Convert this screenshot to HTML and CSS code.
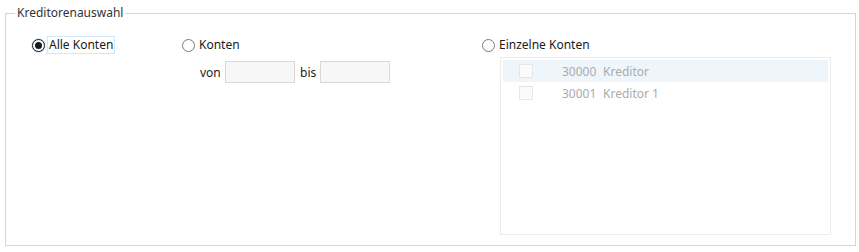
FILE: index.html
```html
<!DOCTYPE html>
<html lang="de">
<head>
  <meta charset="UTF-8" />
  <title>Kreditorenauswahl</title>
  <link rel="stylesheet" href="styles.css">
</head>
<body>
  <fieldset class="group">
    <legend>Kreditorenauswahl</legend>
    <div class="columns">
      <div class="col col-all">
        <label class="radio checked">
          <span class="dot"></span>
          <span class="text focus">Alle Konten</span>
        </label>
      </div>

      <div class="col col-range">
        <label class="radio">
          <span class="dot"></span>
          <span class="text">Konten</span>
        </label>
        <div class="range">
          <span class="range-label">von</span>
          <span class="box"></span>
          <span class="range-label bis">bis</span>
          <span class="box"></span>
        </div>
      </div>

      <div class="col col-single">
        <label class="radio">
          <span class="dot"></span>
          <span class="text">Einzelne Konten</span>
        </label>
        <div class="listbox">
          <div class="row selected">
            <span class="check"></span>
            <span class="nr">30000</span>
            <span class="name">Kreditor</span>
          </div>
          <div class="row">
            <span class="check"></span>
            <span class="nr">30001</span>
            <span class="name">Kreditor 1</span>
          </div>
        </div>
      </div>
    </div>
  </fieldset>
</body>
</html>
```

FILE: styles.css
```css
*, *::before, *::after {
  box-sizing: border-box;
}

body {
  margin: 0;
  background: #ffffff;
  font-family: 'Noto Sans', 'Open Sans', sans-serif;
  font-size: 12px;
  color: #1a1a1a;
}

/* Group box */
.group {
  margin: 5px 3px 0 5px;
  height: 241px;
  padding: 16px 0 0 9px;
  border: 1px solid #d5d5d5;
}

.group legend {
  padding: 0 2px;
  line-height: 16px;
  color: #333;
}

.columns {
  display: flex;
  padding-left: 17px;
}

.col-all { width: 150px; }
.col-range { width: 300px; }
.col-single { flex: 1; }

/* Radio buttons */
.radio {
  display: flex;
  align-items: center;
  height: 16px;
}

.radio .dot {
  width: 13px;
  height: 13px;
  border: 1px solid #7a7a7a;
  border-radius: 50%;
  background: #fff;
  margin-right: 2px;
  position: relative;
  flex-shrink: 0;
}

.radio.checked .dot {
  border-color: #1a1a1a;
  box-shadow: 0 0 0 0.5px #b9d3ea;
}

.radio.checked .dot::after {
  content: '';
  position: absolute;
  left: 2px;
  top: 2px;
  width: 7px;
  height: 7px;
  border-radius: 50%;
  background: #1a1a1a;
}

.radio .text {
  padding: 0 1px;
  line-height: 16px;
  border: 1px solid transparent;
}

.radio .text.focus {
  border-color: #d4e6f6;
}

/* von / bis */
.range {
  display: flex;
  align-items: center;
  margin: 8px 0 0 18px;
}

.range-label {
  width: 25px;
}

.range-label.bis {
  padding-left: 5px;
}

.box {
  width: 70px;
  height: 22px;
  border: 1px solid #d9d9d9;
  background: #f7f7f7;
}

/* Einzelne Konten list */
.listbox {
  margin: 4px 0 0 18px;
  width: 331px;
  height: 178px;
  border: 1px solid #ececec;
  padding: 2px;
}

.row {
  display: flex;
  align-items: center;
  height: 22px;
  color: #ababab;
}

.row.selected {
  background: #eef6fb;
}

.row .check {
  width: 14px;
  height: 14px;
  border: 1px solid #e6e6e6;
  margin-left: 16px;
  background: #fbfbfb;
}

.row .nr {
  margin-left: 29px;
  width: 41px;
}
```
